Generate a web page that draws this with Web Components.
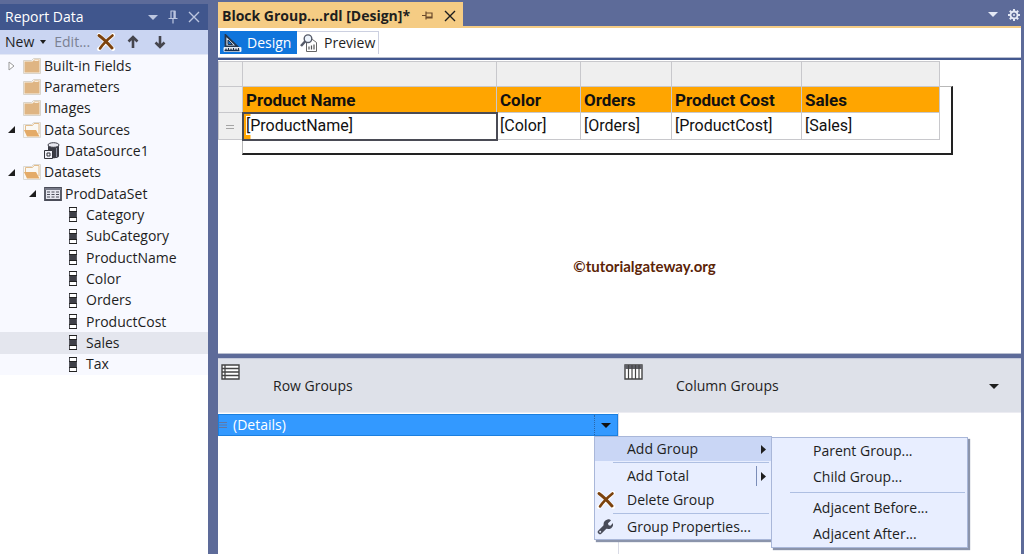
<!DOCTYPE html>
<html lang="en">
<head>
<meta charset="utf-8">
<meta name="viewport" content="width=device-width, initial-scale=1">
<title>Report Designer</title>
<style>
  html, body { margin: 0; height: 100%; }
  body { font: 14px/20px "Open Sans", "Noto Sans", sans-serif; color: #1e1e1e; background: #5d6b99; overflow: hidden; }
</style>
</head>
<body>
<report-studio></report-studio>

<script>
const ICONS = {
  caret: [10, 5, '<path d="M0 0h10L5 5z" fill="currentColor"/>'],
  smallCaret: [6, 4, '<path d="M0 0h6L3 4z" fill="currentColor"/>'],
  right: [5, 9, '<path d="M0 0l5 4.5L0 9z" fill="currentColor"/>'],
  pin: [10, 14, '<path d="M2.5 1h5M3 1v7M6 1v7M7.2 1v7M0.500 8.500h9M5 8.500v5" fill="none" stroke="currentColor" stroke-width="1.200"/>'],
  pinSide: [11, 9, '<path d="M0 4.500h4M4 .5v8M4 2h6v5H4M4 6h6" fill="none" stroke="#6b4a2c" stroke-width="1.200"/>'],
  close: [12, 12, '<path d="M1 1l10 10M11 1L1 11" fill="none" stroke="currentColor" stroke-width="1.400"/>'],
  remove: [18, 18, '<path d="M2 2l14 14M16 2L2 16" stroke="#fff" stroke-width="4" stroke-linecap="round"/><path d="M2 2.500c3 2 9 8 13 12.500" stroke="#7c420d" stroke-width="3" stroke-linecap="round" fill="none"/><path d="M15.500 2.500C10 7 6 11 3 15.500" stroke="#7c420d" stroke-width="2.600" stroke-linecap="round" fill="none"/>'],
  up: [12, 14, '<path d="M6 13V2M1.500 6.500L6 2l4.500 4.500" fill="none" stroke="#45454d" stroke-width="2.600"/>'],
  down: [12, 14, '<path d="M6 1v11M1.500 7.500L6 12l4.500-4.500" fill="none" stroke="#45454d" stroke-width="2.600"/>'],
  closedNode: [7, 10, '<path d="M1 1l5 4-5 4z" fill="#fff" stroke="#999"/>'],
  openNode: [7, 7, '<path d="M7 0v7H0z" fill="#1e1e1e"/>'],
  folder: [18, 16, '<path d="M.5 15.500v-13h8l2-2h7v15z" fill="#f7f4ee" stroke="#d9d4cb"/><path d="M1.500 14.500v-11h8l2-2h5v13z" fill="#dfb583"/><path d="M11.500 2.500h4" stroke="#f7eee0"/>'],
  folderOpen: [18, 16, '<path d="M.5 15.500V2.500h8l2-2h7v15z" fill="#faf8f4" stroke="#dcdad5"/><path d="M2.500 8V3.500h7l1.500-2h5V12" fill="none" stroke="#e3bd8c"/><path d="M1 8h12l3.500 6.500H4z" fill="#e4ab68"/>'],
  database: [16, 17, '<path d="M4 3v11c0 3 11 3 11 0V3z" fill="#3b3c45"/><ellipse cx="9.500" cy="3" rx="5.500" ry="2.300" fill="#e8e8f0" stroke="#3b3c45"/><path d="M12.500 6v9" stroke="#8d90a0"/><path d="M.5 8.500h8v8h-8z" fill="#f3f3fa" stroke="#33343c"/><path d="M3 11h3v3H3z" fill="none" stroke="#33343c"/>'],
  dataset: [18, 14, '<path d="M1 1h16v12H1z" fill="#e6e7f0" stroke="#4b4d59" stroke-width="1.800"/><path d="M1 1h16v2H1z" fill="#777a88"/><path d="M3 5h12M3 7.500h12M3 10h12" stroke="#4b4d59" stroke-dasharray="3 1.500" stroke-width="1.200"/>'],
  field: [8, 15, '<path d="M.5.5h7v14h-7z" fill="#fff" stroke="#55565d"/><path d="M0 0h8v1H0zM0 14h8v1H0z" fill="#222"/><path d="M1 5h6v5H1z" fill="#3f4048"/><path d="M0 4.500h8M0 10.500h8" stroke="#222"/>'],
  design: [19, 18, '<path d="M2.500 1v11.500h12z" fill="#dbe8f6" stroke="#26364c" stroke-width="1.800"/><path d="M5 6v4.500h4.500z" fill="#0f75dc" stroke="#26364c"/><path d="M1 13.500h17v4H1z" fill="#fff" stroke="#dfe9f5"/><path d="M1.500 16.500h15M3 14.500v2M5.500 14v3M8 14.500v2M10.500 14v3M13 14.500v2M15.500 14v3" stroke="#182c48" stroke-width="1.300"/>'],
  preview: [18, 18, '<path d="M6.500 5.500h6l4 3v9h-10z" fill="#fff" stroke="#666"/><path d="M9 15.500v-3M11.500 15.500v-4M14 15.500v-5" stroke="#555" stroke-width="1.200"/><circle cx="8" cy="4.700" r="3.800" fill="#edf4fc" stroke="#555a68" stroke-width="1.400"/><path d="M5.500 7L1 12" stroke="#555a68" stroke-width="2.600"/>'],
  gear: [12, 12, '<path d="M6 0v12M0 6h12M1.800 1.800l8.400 8.400M10.200 1.800L1.800 10.200" stroke="#e4e9f5" stroke-width="2"/><circle cx="6" cy="6" r="3.500" fill="#5d6b99" stroke="#e4e9f5" stroke-width="1.800"/><circle cx="6" cy="6" r="1" fill="#e4e9f5"/>'],
  rows: [19, 16, '<path d="M1 1h17v14H1z" fill="#fff" stroke="#444" stroke-width="1.400"/><path d="M1 4.500h17M1 8h17M1 11.500h17M4 1v14" stroke="#444" stroke-width="1.300"/>'],
  columns: [19, 16, '<path d="M1 1h17v14H1z" fill="#fff" stroke="#444" stroke-width="1.400"/><path d="M1 1h17v4H1z" fill="#606168"/><path d="M4.500 1v14M8 1v14M11.500 1v14M15 1v14" stroke="#444" stroke-width="1.200"/>'],
  grip: [8, 8, '<path d="M0 1.500h8M0 4h8M0 6.500h8" stroke="currentColor"/>'],
  equal: [8, 6, '<path d="M0 1.500h8M0 4.500h8" stroke="#a5a5a5"/>'],
  wrench: [16, 16, '<path d="M3 13l6-6" stroke="#484b58" stroke-width="4.500" stroke-linecap="round"/><path d="M14 1.500l-3 2.800.5 2 2 .5L16 4a4.800 4.800 0 1 1-5.500-3.500c1.500-.5 2.700 0 3.500 1z" fill="#484b58"/><circle cx="3.200" cy="12.800" r="1" fill="#dfe4f5"/>']
};

function define(name, html, setup) {
  const template = document.createElement('template');
  template.innerHTML = html;
  customElements.define(name, class extends HTMLElement {
    connectedCallback() {
      if (this.shadowRoot) return;
      const root = this.attachShadow({ mode: 'open' });
      root.append(template.content.cloneNode(true));
      if (setup) setup(this, root);
    }
  });
}

define('ui-icon', '<style>:host{display:inline-flex;flex:none}svg{display:block}</style><span></span>', (host, root) => {
  const [w, h, body] = ICONS[host.getAttribute('name')];
  root.querySelector('span').innerHTML = `<svg width="${w}" height="${h}" viewBox="0 0 ${w} ${h}" fill="none" aria-hidden="true">${body}</svg>`;
});

const BUTTON = 'button{font:inherit;color:inherit;background:none;border:0;padding:0;margin:0;display:flex;align-items:center}';

define('tree-item', `
<style>
  :host { display: flex; align-items: center; min-width: 0; white-space: nowrap; }
  :host([level="1"]) { padding-left: 8px; }
  :host([level="2"]) { padding-left: 29px; }
  :host([level="3"]) { padding-left: 54px; }
  :host([selected]) { background: #e4e6ee; }
  .node { width: 15px; display: flex; flex: none; }
  .pic { width: 21px; display: flex; flex: none; }
  :host([level="3"]) .pic { width: 17px; }
</style>
<span class="node"></span><span class="pic"></span><slot></slot>`, (host, root) => {
  const add = (sel, name) => { if (name) root.querySelector(sel).innerHTML = `<ui-icon name="${name}"></ui-icon>`; };
  add('.node', host.getAttribute('node'));
  add('.pic', host.getAttribute('icon'));
});

define('report-data-panel', `
<style>
  ${BUTTON}
  :host { display: flex; flex-direction: column; background: #fff; min-width: 0; }
  header { height: 26px; background: #40568d; color: #fff; display: flex; align-items: center; padding: 0 8px 0 5px; }
  h2 { font: inherit; margin: 0; flex: 1; }
  .tools { display: flex; gap: 10px; color: #bcc6e0; }
  .bar { height: 24px; background: #cad5f2; display: flex; align-items: center; padding-left: 5px; border-bottom: 1px solid #e3e8f6; }
  .bar button { flex: none; }
  .new { gap: 6px; margin-right: 8px; }
  .edit { color: #7b8193; margin-right: 7px; }
  .del { margin-right: 12px; }
  .up { margin-right: 15px; }
  nav { display: grid; grid-auto-rows: 1fr; height: 320px; background: #f8f9ff; }
</style>
<header><h2>Report Data</h2>
  <div class="tools">
    <button aria-label="Window position"><ui-icon name="caret"></ui-icon></button>
    <button aria-label="Auto hide"><ui-icon name="pin"></ui-icon></button>
    <button aria-label="Close"><ui-icon name="close"></ui-icon></button>
  </div>
</header>
<div class="bar">
  <button class="new">New <ui-icon name="smallCaret"></ui-icon></button>
  <button class="edit">Edit...</button>
  <button class="del" aria-label="Delete"><ui-icon name="remove"></ui-icon></button>
  <button class="up" aria-label="Move up"><ui-icon name="up"></ui-icon></button>
  <button aria-label="Move down"><ui-icon name="down"></ui-icon></button>
</div>
<nav aria-label="Report data">
  <tree-item level="1" node="closedNode" icon="folder">Built-in Fields</tree-item>
  <tree-item level="1" icon="folder">Parameters</tree-item>
  <tree-item level="1" icon="folder">Images</tree-item>
  <tree-item level="1" node="openNode" icon="folderOpen">Data Sources</tree-item>
  <tree-item level="2" icon="database">DataSource1</tree-item>
  <tree-item level="1" node="openNode" icon="folderOpen">Datasets</tree-item>
  <tree-item level="2" node="openNode" icon="dataset">ProdDataSet</tree-item>
  <tree-item level="3" icon="field">Category</tree-item>
  <tree-item level="3" icon="field">SubCategory</tree-item>
  <tree-item level="3" icon="field">ProductName</tree-item>
  <tree-item level="3" icon="field">Color</tree-item>
  <tree-item level="3" icon="field">Orders</tree-item>
  <tree-item level="3" icon="field">ProductCost</tree-item>
  <tree-item level="3" icon="field" selected>Sales</tree-item>
  <tree-item level="3" icon="field">Tax</tree-item>
</nav>`);

define('document-tabs', `
<style>
  ${BUTTON}
  :host { display: block; }
  .strip { display: flex; align-items: center; height: 26px; padding-right: 4px; }
  .tab { align-self: flex-end; box-sizing: border-box; width: 245px; height: 24px; background: #f5cc84; display: flex; align-items: center; gap: 11px; padding: 3px 7px 0 4px; }
  .tab span { flex: 1; font-weight: 700; white-space: nowrap; }
  .right { margin-left: auto; display: flex; align-items: center; gap: 10px; color: #e4e9f5; padding-top: 3px; }
  .views { box-sizing: border-box; height: 32px; background: #fff; border-top: 2px solid #f5cc84; border-bottom: 1px solid #b9bfd0; padding: 3px 2px; display: flex; margin-right: 3px; }
  .views button { box-sizing: border-box; height: 23px; }
  .design { width: 77px; background: #0f75dc; color: #fff; gap: 5px; padding-left: 3px; }
  .preview { width: 82px; gap: 6px; padding-left: 3px; border: solid #ccd0e0; border-width: 1px 1px 0 0; }
</style>
<div class="strip">
  <div class="tab"><span>Block Group....rdl [Design]*</span>
    <button aria-label="Pin tab"><ui-icon name="pinSide"></ui-icon></button>
    <button aria-label="Close tab"><ui-icon name="close"></ui-icon></button></div>
  <div class="right">
    <button aria-label="Open documents"><ui-icon name="caret"></ui-icon></button>
    <button aria-label="Options"><ui-icon name="gear"></ui-icon></button></div>
</div>
<div class="views">
  <button class="design"><ui-icon name="design"></ui-icon>Design</button>
  <button class="preview"><ui-icon name="preview"></ui-icon>Preview</button>
</div>`);

define('design-surface', `
<style>
  :host { display: block; background: #fff; border-top: 2px solid #43588f; border-bottom: 1px solid #b9bfd0; padding-top: 1px; min-height: 0; overflow: hidden; }
  .report { display: grid; grid-template-columns: 24px 711px; grid-template-rows: 25px 69px; }
  .body { grid-area: 2 / 2; border: 1px solid #b8b8b8; border-right: 2px solid #222; border-bottom: 2px solid #222; }
  table { grid-area: 1 / 1 / 3 / 3; border-collapse: collapse; table-layout: fixed; width: 722px; height: 78px; align-self: start; font: 16px/20px Roboto, sans-serif; color: #111; }
  th, td { border: 1px solid #c8c8cc; padding: 0 3px; text-align: left; white-space: nowrap; }
  .handles th, tbody th, .names th:first-child { background: #efefef; }
  .handles th { height: 24px; }
  tbody th { padding-left: 7px; }
  tbody ui-icon { vertical-align: middle; }
  .names th { height: 25px; font-weight: 700; font-size: 17px; }
  .names th:not(:first-child) { background: #ffa500; }
  td, tbody th { height: 26px; }
  td.active { outline: 2px solid #4a4b55; outline-offset: -1px; background: linear-gradient(to right, #ffa500 7px, #fff 7px); }
  td.active span { background: #fff; }
  p { margin: 99px 0 0; padding-left: 50px; text-align: center; font: bold 15px/24px Lato, sans-serif; color: #5b2407; }
</style>
<div class="report">
  <div class="body"></div>
  <table>
    <colgroup><col style="width:24px"><col style="width:254px"><col style="width:84px"><col style="width:91px"><col style="width:130px"><col style="width:138px"></colgroup>
    <thead>
      <tr class="handles"><th></th><th></th><th></th><th></th><th></th><th></th></tr>
      <tr class="names"><th></th><th>Product Name</th><th>Color</th><th>Orders</th><th>Product Cost</th><th>Sales</th></tr>
    </thead>
    <tbody><tr><th><ui-icon name="equal"></ui-icon></th><td class="active"><span>[ProductName]</span></td><td>[Color]</td><td>[Orders]</td><td>[ProductCost]</td><td>[Sales]</td></tr></tbody>
  </table>
</div>
<p>©tutorialgateway.org</p>`);

define('menu-item', `
<style>
  ${BUTTON}
  :host { display: block; position: relative; }
  button { width: 100%; height: var(--item-height, 26px); padding-right: 5px; white-space: nowrap; }
  :host([highlighted]) button { background: #c9d6f5; }
  .pic { width: var(--gutter, 32px); padding-left: 2px; box-sizing: border-box; flex: none; display: flex; }
  .text { flex: 1; text-align: left; }
  .arrow { display: none; height: 20px; align-items: center; padding-left: 4px; }
  :host([arrow]) .arrow { display: flex; }
  :host([split]) .arrow { border-left: 1px solid #7b8db8; }
</style>
<button role="menuitem"><span class="pic"></span><span class="text"><slot></slot></span><span class="arrow"><ui-icon name="right"></ui-icon></span></button>
<slot name="submenu"></slot>`, (host, root) => {
  const icon = host.getAttribute('icon');
  if (icon) root.querySelector('.pic').innerHTML = `<ui-icon name="${icon}"></ui-icon>`;
});

define('popup-menu', `
<style>
  :host { position: absolute; z-index: 2; box-sizing: border-box; display: block; background: #e8eeff; border: 1px solid #a9b7d9; box-shadow: 2px 2px 1px #8b94ab; color: #1e1e1e; }
  ::slotted(hr) { margin: var(--rule-gap, 1px) 2px var(--rule-gap, 1px) 18px; border: 0; border-top: 1px solid #aebfe2; }
</style><div role="menu"><slot></slot></div>`);

define('groups-pane', `
<style>
  ${BUTTON}
  :host { display: grid; grid-template-columns: 401fr 402fr; grid-template-rows: 54px 1fr; background: #fff; border-top: 1px solid #c3c8da; box-sizing: border-box; }
  .head { background: #dee1e9; border-bottom: 1px solid #ececf2; display: flex; box-sizing: border-box; padding: 5px 22px 0 3px; }
  .head h3 { font: inherit; margin: 12px 0 0 33px; flex: 1; }
  .head.col { padding-left: 5px; }
  .head button { align-self: center; margin-top: -4px; }
  .rows { border-right: 1px solid #d9dbe6; padding-top: 1px; }
  .group { display: flex; align-items: center; height: 22px; background: #3399ff; border: 1px solid #1b7fdf; box-sizing: border-box; color: #fff; }
  .group .grip { color: #6277a4; width: 14px; display: flex; }
  .name { flex: 1; }
  .drop { position: relative; }
  .drop > button { width: 23px; height: 20px; justify-content: center; color: #111; border-left: 1px dotted #2b66a8; }
  .main { top: 100%; left: 0; width: 178px; margin-top: 1px; }
  .main menu-item { --item-height: 24px; }
  .sub { top: 0; left: 100%; width: 197px; --gutter: 41px; --rule-gap: 2px; }
  .sub menu-item { --item-height: 26px; }
</style>
<div class="head"><ui-icon name="rows"></ui-icon><h3>Row Groups</h3></div>
<div class="head col"><ui-icon name="columns"></ui-icon><h3>Column Groups</h3><button aria-label="Grouping options"><ui-icon name="caret"></ui-icon></button></div>
<div class="rows">
  <div class="group"><span class="grip"><ui-icon name="grip"></ui-icon></span><span class="name">(Details)</span>
    <div class="drop"><button aria-label="Group menu" aria-haspopup="menu"><ui-icon name="caret"></ui-icon></button>
      <popup-menu class="main">
        <menu-item arrow highlighted>Add Group
          <popup-menu class="sub" slot="submenu">
            <menu-item>Parent Group...</menu-item>
            <menu-item>Child Group...</menu-item>
            <hr>
            <menu-item>Adjacent Before...</menu-item>
            <menu-item>Adjacent After...</menu-item>
          </popup-menu>
        </menu-item>
        <hr>
        <menu-item arrow split>Add Total</menu-item>
        <menu-item icon="remove">Delete Group</menu-item>
        <hr>
        <menu-item icon="wrench">Group Properties...</menu-item>
      </popup-menu>
    </div>
  </div>
</div>
<div></div>`);

define('report-studio', `
<style>
  :host { display: grid; grid-template-columns: 208px minmax(0, 1fr); column-gap: 10px; height: 100vh; }
  report-data-panel { margin-top: 4px; }
  main { display: grid; grid-template-rows: auto minmax(0, 1fr) 196px; min-width: 0; }
  design-surface { margin: 0 3px 4px 0; }
  groups-pane { margin-right: 3px; }
</style>
<report-data-panel></report-data-panel>
<main><document-tabs></document-tabs><design-surface></design-surface><groups-pane></groups-pane></main>`);
</script>
</body>
</html>
